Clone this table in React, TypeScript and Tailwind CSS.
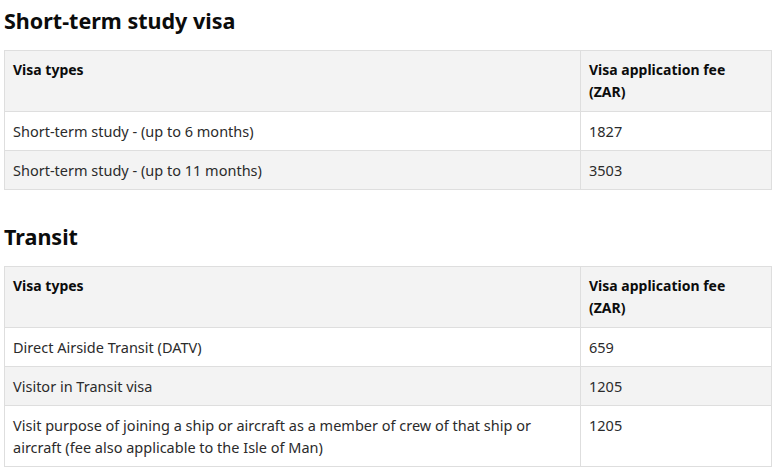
const sections = [
  {
    title: "Short-term study visa",
    rows: [
      ["Short-term study - (up to 6 months)", "1827"],
      ["Short-term study - (up to 11 months)", "3503"],
    ],
  },
  {
    title: "Transit",
    rows: [
      ["Direct Airside Transit (DATV)", "659"],
      ["Visitor in Transit visa", "1205"],
      [
        "Visit purpose of joining a ship or aircraft as a member of crew of that ship or aircraft (fee also applicable to the Isle of Man)",
        "1205",
      ],
    ],
  },
];

function FeeTable({ rows }: { rows: string[][] }) {
  return (
    <table className="w-[768px] table-fixed border-collapse border border-[#dedede] leading-[22px]">
      <thead>
        <tr className="bg-[#f3f3f3]">
          <th className="w-[576px] border border-[#dedede] px-2 py-2 text-left align-top text-[14px] font-bold text-[#0b0c0c]">Visa types</th>
          <th className="border border-[#dedede] px-2 py-2 text-left align-top text-[14px] font-bold text-[#0b0c0c]">
            Visa application fee
            <br />
            (ZAR)
          </th>
        </tr>
      </thead>
      <tbody>
        {rows.map(([type, fee], i) => (
          <tr key={i} className={i % 2 === 1 ? "bg-[#f3f3f3]" : "bg-white"}>
            <td className="border border-[#dedede] py-2 pl-2 pr-3 align-top text-[14.5px] text-[#2b2b2b]">{type}</td>
            <td className="border border-[#dedede] px-2 py-2 align-top text-[14.5px] text-[#2b2b2b]">{fee}</td>
          </tr>
        ))}
      </tbody>
    </table>
  );
}

export default function App() {
  return (
    <div className="min-h-[468px] bg-white px-1 pt-[6px] font-['Noto_Sans',sans-serif]">
      {sections.map((s, i) => (
        <div key={s.title} className={i > 0 ? "mt-[32px]" : ""}>
          <h2 className="mb-[14px] text-[21.5px] font-bold leading-[30px] text-[#0b0c0c]">{s.title}</h2>
          <FeeTable rows={s.rows} />
        </div>
      ))}
    </div>
  );
}
